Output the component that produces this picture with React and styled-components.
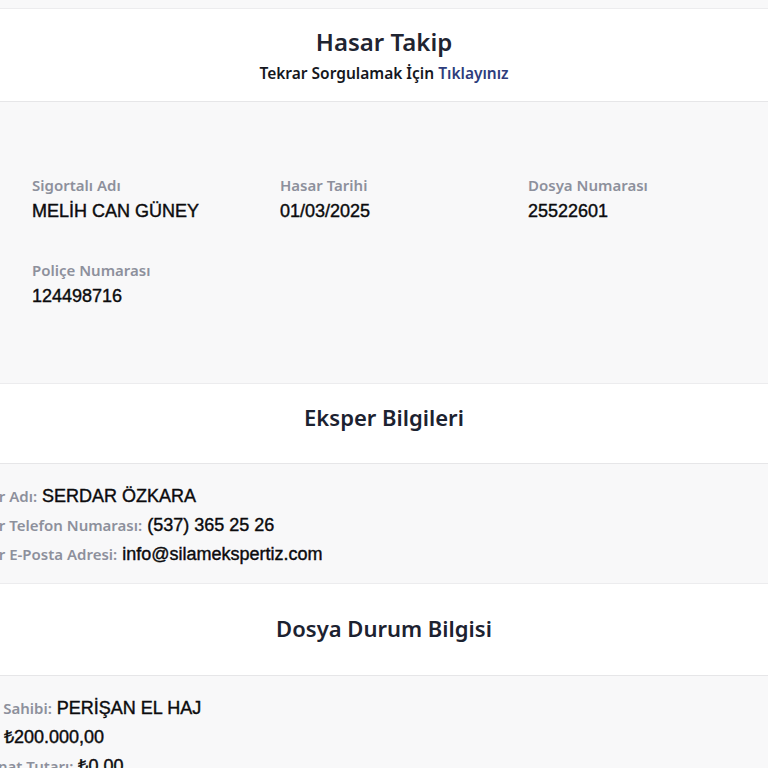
import React from 'react';
import styled, { createGlobalStyle } from 'styled-components';

const GlobalStyle = createGlobalStyle`
  html, body {
    margin: 0;
    padding: 0;
    background: #f8f8f9;
    overflow: hidden;
  }
  * { box-sizing: border-box; }
`

const Page = styled.div`
  display: flex;
  flex-direction: column;
  padding-top: 8px;
  width: 768px;
  font-family: "Noto Sans", "Lato", sans-serif;
`

const Band = styled.section`
  background: #ffffff;
  border-top: 1px solid #ececee;
  border-bottom: 1px solid #e6e6e8;
  text-align: center;
  padding: ${p => p.$top}px 0 ${p => p.$bottom}px;
`

const MainTitle = styled.h1`
  margin: 0;
  font-size: 24px;
  line-height: 30px;
  font-weight: 600;
  color: #1f2431;
`

const Sub = styled.p`
  margin: 6px 0 0;
  font-size: 15.5px;
  line-height: 20px;
  font-weight: 600;
  color: #15171d;
`

const Link = styled.a`
  color: #2d3d7c;
  text-decoration: none;
  cursor: pointer;
`

const SectionTitle = styled.h2`
  margin: 0;
  font-size: 22px;
  line-height: 28px;
  font-weight: 600;
  color: #1c2230;
`

const InfoGrid = styled.div`
  display: grid;
  grid-template-columns: repeat(3, 248px);
  row-gap: 39px;
  padding: 74px 32px 76px;
`

const Field = styled.div`
  display: flex;
  flex-direction: column;
  gap: 6px;
`

const Label = styled.span`
  font-size: 15px;
  line-height: 18px;
  font-weight: 600;
  color: #8d909c;
`

const Value = styled.span`
  font-family: "Liberation Sans", Arial, sans-serif;
  font-size: 18px;
  line-height: 22px;
  color: #0b0b0d;
  -webkit-text-stroke: 0.4px #0b0b0d;
`

const List = styled.div`
  display: flex;
  flex-direction: column;
  padding: ${p => p.$top}px 0 11px;
  margin-left: -44px;
`

const Line = styled.div`
  display: flex;
  align-items: baseline;
  gap: 5px;
  height: 29px;
  line-height: 29px;
  white-space: nowrap;
`

const info = [
  ['Sigortalı Adı', 'MELİH CAN GÜNEY'],
  ['Hasar Tarihi', '01/03/2025'],
  ['Dosya Numarası', '25522601'],
  ['Poliçe Numarası', '124498716'],
]

const eksper = [
  ['Eksper Adı:', 'SERDAR ÖZKARA'],
  ['Eksper Telefon Numarası:', '(537) 365 25 26'],
  ['Eksper E-Posta Adresi:', 'info@silamekspertiz.com'],
]

const durum = [
  ['Poliçe Sahibi:', 'PERİŞAN EL HAJ'],
  ['Tutar:', '₺200.000,00'],
  ['Tazminat Tutarı:', '₺0,00'],
]

const App = () => (
  <>
    <GlobalStyle />
    <Page>
      <Band $top={18} $bottom={18}>
        <MainTitle>Hasar Takip</MainTitle>
        <Sub>Tekrar Sorgulamak İçin <Link>Tıklayınız</Link></Sub>
      </Band>

      <InfoGrid>
        {info.map(([l, v]) => (
          <Field key={l}>
            <Label>{l}</Label>
            <Value>{v}</Value>
          </Field>
        ))}
      </InfoGrid>

      <Band $top={19} $bottom={32}>
        <SectionTitle>Eksper Bilgileri</SectionTitle>
      </Band>
      <List $top={21}>
        {eksper.map(([l, v]) => (
          <Line key={l}><Label>{l}</Label><Value>{v}</Value></Line>
        ))}
      </List>

      <Band $top={30} $bottom={33}>
        <SectionTitle>Dosya Durum Bilgisi</SectionTitle>
      </Band>
      <List $top={21}>
        {durum.map(([l, v]) => (
          <Line key={l}><Label>{l}</Label><Value>{v}</Value></Line>
        ))}
      </List>
    </Page>
  </>
);

export default App;
